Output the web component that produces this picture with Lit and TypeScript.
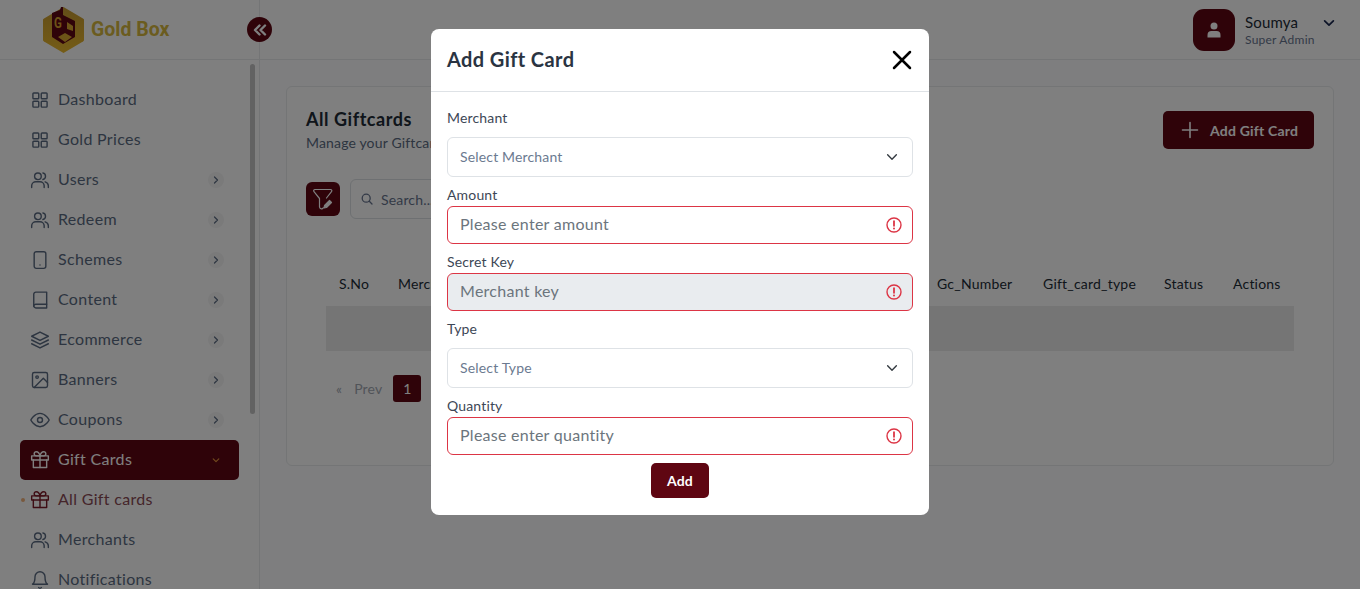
import { LitElement, html, css, svg } from 'lit'
import { customElement } from 'lit/decorators.js'

const icons: Record<string, unknown> = {
	grid: svg`<rect x="3.5" y="3.5" width="7" height="7" rx="1"/><rect x="13.5" y="3.5" width="7" height="7" rx="1"/><rect x="3.5" y="13.5" width="7" height="7" rx="1"/><rect x="13.5" y="13.5" width="7" height="7" rx="1"/>`,
	users: svg`<circle cx="9.5" cy="7.5" r="4"/><path d="M2 21v-2a5 5 0 0 1 5-5h5a5 5 0 0 1 5 5v2"/><path d="M15.500 3.600a4 4 0 0 1 0 7.800"/><path d="M22 21v-2a5 5 0 0 0-3.800-4.800"/>`,
	phone: svg`<rect x="5" y="2" width="14" height="20" rx="2.500"/><path d="M12 18h.01"/>`,
	book: svg`<path d="M4.500 19.500A2.500 2.500 0 0 1 7 17h13"/><path d="M7 2.500h13v19H7a2.500 2.500 0 0 1-2.500-2.500V5A2.500 2.500 0 0 1 7 2.500z"/>`,
	layers: svg`<path d="M12 2.500 2 7.500l10 5 10-5-10-5z"/><path d="m2 16.500 10 5 10-5"/><path d="m2 12 10 5 10-5"/>`,
	image: svg`<rect x="3" y="3" width="18" height="18" rx="2"/><circle cx="8.500" cy="8.500" r="1.500"/><path d="m21 15-5-5L5 21"/>`,
	eye: svg`<path d="M1 12s4-8 11-8 11 8 11 8-4 8-11 8-11-8-11-8z"/><circle cx="12" cy="12" r="3"/>`,
	gift: svg`<path d="M20 12v9H4v-9"/><rect x="2" y="7" width="20" height="5"/><path d="M12 21V7"/><path d="M12 7H7.500a2.500 2.500 0 0 1 0-5C11 2 12 7 12 7z"/><path d="M12 7h4.500a2.500 2.500 0 0 0 0-5C13 2 12 7 12 7z"/>`,
	bell: svg`<path d="M18 8A6 6 0 0 0 6 8c0 7-3 9-3 9h18s-3-2-3-9"/><path d="M13.700 21a2 2 0 0 1-3.400 0"/>`,
}

const icon = (name: string) =>
	html`<svg class="ico" viewBox="0 0 24 24" fill="none" stroke="currentColor" stroke-width="1.700" stroke-linecap="round" stroke-linejoin="round">${icons[name]}</svg>`

const chevronDown = html`<svg class="chev-down" viewBox="0 0 16 16" fill="none" stroke="currentColor" stroke-width="1.600" stroke-linecap="round" stroke-linejoin="round"><path d="m3 5.500 5 5 5-5"/></svg>`

const alertIcon = html`<svg class="alert" viewBox="0 0 16 16" fill="none" stroke="#dc3545"><circle cx="8" cy="8" r="7" stroke-width="1.400"/><path d="M8 4.200v4.600" stroke-width="1.800" stroke-linecap="round"/><circle cx="8" cy="11.400" r="1" fill="#dc3545" stroke="none"/></svg>`

const navItems = [
	{ label: 'Dashboard', icon: 'grid' },
	{ label: 'Gold Prices', icon: 'grid' },
	{ label: 'Users', icon: 'users', more: true },
	{ label: 'Redeem', icon: 'users', more: true },
	{ label: 'Schemes', icon: 'phone', more: true },
	{ label: 'Content', icon: 'book', more: true },
	{ label: 'Ecommerce', icon: 'layers', more: true },
	{ label: 'Banners', icon: 'image', more: true },
	{ label: 'Coupons', icon: 'eye', more: true },
]

@customElement('app-root')
export class AppRoot extends LitElement {
	static styles = css`
		:host {
			display: block;
			position: relative;
			height: 589px;
			overflow: hidden;
			background: #fcfcfe;
			font-family: 'Lato', 'Liberation Sans', sans-serif;
			letter-spacing: 0.01em;
			color: #212b36;
		}
		* {
			box-sizing: border-box;
		}

		/* Header */
		.header {
			display: flex;
			align-items: center;
			height: 60px;
			background: #fff;
			border-bottom: 1px solid #e8ebed;
		}
		.brand {
			display: flex;
			align-items: center;
			gap: 7px;
			width: 260px;
			height: 100%;
			padding-left: 43px;
			border-right: 1px solid #e8ebed;
		}
		.brand svg {
			width: 41px;
			height: 46px;
		}
		.brand span {
			font-family: 'Roboto', sans-serif;
			font-size: 19.5px;
			font-weight: 700;
			letter-spacing: 0;
			color: #d6b83f;
		}
		.collapse {
			position: absolute;
			left: 247px;
			top: 17px;
			width: 25px;
			height: 25px;
			border-radius: 50%;
			background: #5f0612;
			display: flex;
			align-items: center;
			justify-content: center;
		}
		.collapse svg {
			width: 14px;
			height: 14px;
		}
		.user {
			margin-left: auto;
			display: flex;
			align-items: center;
			padding-right: 24px;
		}
		.avatar {
			width: 42px;
			height: 42px;
			border-radius: 11px;
			background: #5f0612;
			display: flex;
			align-items: center;
			justify-content: center;
		}
		.avatar svg {
			width: 16px;
			height: 16px;
		}
		.who {
			margin-left: 10px;
			width: 77px;
			display: flex;
			flex-direction: column;
		}
		.who b {
			font-size: 15px;
			font-weight: 400;
			line-height: 20px;
			color: #212b36;
		}
		.who small {
			font-size: 12px;
			line-height: 16px;
			letter-spacing: 0.02em;
			color: #67748e;
		}
		.user .chev-down {
			width: 14px;
			height: 14px;
			color: #1b2850;
			stroke-width: 2;
			margin-bottom: 14px;
		}

		/* Shell */
		.shell {
			display: flex;
			height: 529px;
		}
		.sidebar {
			position: relative;
			flex: 0 0 260px;
			padding: 20px 20px 0;
			background: #fff;
			border-right: 1px solid #e8ebed;
			overflow: hidden;
		}
		.scrollbar {
			position: absolute;
			left: 250px;
			top: 4px;
			width: 5px;
			height: 350px;
			border-radius: 3px;
			background: #c4c4c4;
		}
		.nav-item {
			display: flex;
			align-items: center;
			height: 40px;
			width: 219px;
			padding: 0 0 4px 10px;
			font-size: 16px;
			letter-spacing: 0.02em;
			color: #5b6b82;
			border-radius: 5px;
		}
		.nav-item.active {
			background: #5f0612;
			color: #fff;
		}
		.nav-item.sub {
			position: relative;
			color: #8a4a55;
		}
		.nav-item.sub .ico {
			color: #7d1a28;
		}
		.nav-item.sub::before {
			content: '';
			position: absolute;
			left: 1px;
			top: 18px;
			width: 4px;
			height: 4px;
			border-radius: 50%;
			background: #f0b27a;
		}
		.ico {
			flex: none;
			width: 20px;
			height: 20px;
			margin: 3px 8px 0 0;
		}
		.arrow {
			margin: 4px 15px 0 auto;
			width: 16px;
			height: 16px;
			border-radius: 50%;
			background: #f4f4f5;
			display: flex;
			align-items: center;
			justify-content: center;
			color: #5b6b82;
		}
		.arrow svg {
			width: 8px;
			height: 8px;
		}
		.active .arrow {
			background: none;
			color: #e6953c;
		}

		/* Content */
		.main {
			flex: 1;
			padding: 26px 26px 0;
		}
		.card {
			height: 380px;
			padding: 20px 19px;
			background: #fff;
			border: 1px solid #e8ebed;
			border-radius: 6px;
		}
		.card-head {
			display: flex;
			justify-content: space-between;
			align-items: flex-start;
			height: 72px;
		}
		.card-head h4 {
			margin: 0;
			font-size: 18px;
			line-height: 25px;
			font-weight: 700;
			letter-spacing: 0.03em;
			color: #212b36;
		}
		.card-head p {
			margin: 0;
			font-size: 14px;
			line-height: 21px;
			color: #5b6b82;
		}
		.add-btn {
			display: flex;
			align-items: center;
			gap: 11px;
			width: 151px;
			height: 38px;
			margin: 4px 0 0;
			padding-left: 18px;
			border-radius: 5px;
			background: #5f0612;
			color: #fff;
			font-size: 14px;
			font-weight: 700;
			letter-spacing: 0.015em;
		}
		.add-btn svg {
			width: 18px;
			height: 18px;
		}
		.tools {
			display: flex;
			align-items: center;
			gap: 10px;
			height: 40px;
		}
		.filter {
			width: 34px;
			height: 34px;
			border-radius: 6px;
			background: #5f0612;
			display: flex;
			align-items: center;
			justify-content: center;
		}
		.filter svg {
			width: 24px;
			height: 24px;
		}
		.search {
			display: flex;
			align-items: center;
			gap: 8px;
			width: 200px;
			height: 40px;
			padding-left: 10px;
			border: 1px solid #dce0e4;
			border-radius: 6px;
			font-size: 14px;
			color: #67748e;
		}
		.search svg {
			width: 12px;
			height: 12px;
		}
		.table {
			width: 968px;
			margin: 42px 0 0 20px;
		}
		.thead {
			display: grid;
			grid-template-columns: 59px 539px 106px 121px 69px 74px;
			height: 45px;
			align-items: center;
			padding-bottom: 1px;
			font-size: 14px;
			font-weight: 400;
			letter-spacing: 0.015em;
			color: #212b36;
		}
		.thead span {
			padding-left: 13px;
		}
		.empty-row {
			height: 45px;
			background: #eaeaea;
		}
		.pager {
			display: flex;
			align-items: center;
			height: 27px;
			margin: 24px 0 0 10px;
			font-size: 14px;
			color: #a3a9b3;
		}
		.pager .prev {
			margin-left: 12px;
			margin-right: 11px;
		}
		.pager .page {
			width: 28px;
			height: 27px;
			border-radius: 3px;
			background: #5f0612;
			color: #fff;
			display: flex;
			align-items: center;
			justify-content: center;
		}

		/* Modal */
		.backdrop {
			position: absolute;
			inset: 0;
			background: rgba(0, 0, 0, 0.5);
			display: flex;
			justify-content: center;
			padding-top: 29px;
		}
		.modal {
			width: 498px;
			height: 486px;
			background: #fff;
			border-radius: 8px;
			display: flex;
			flex-direction: column;
		}
		.modal-head {
			display: flex;
			align-items: center;
			justify-content: space-between;
			height: 63px;
			padding: 0 16px;
			border-bottom: 1px solid #dee2e6;
		}
		.modal-head h5 {
			margin: 0 0 2px;
			font-size: 20px;
			font-weight: 700;
			letter-spacing: 0.02em;
			color: #2a3442;
		}
		.close {
			width: 24px;
			height: 24px;
			margin-right: -1px;
		}
		.modal-body {
			display: flex;
			flex-direction: column;
			gap: 8px;
			padding: 16px 16px 17px;
		}
		label {
			display: block;
			font-size: 14px;
			line-height: 19px;
			padding-bottom: 2px;
			color: #3d4756;
		}
		.select {
			display: flex;
			align-items: center;
			justify-content: space-between;
			height: 40px;
			margin-top: 8px;
			padding: 0 13px 2px 12px;
			border: 1px solid #dee2e6;
			border-radius: 6px;
			font-size: 14px;
			color: #6b7a90;
		}
		.select .chev-down {
			width: 14px;
			height: 14px;
			margin-top: 1px;
			color: #343a40;
		}
		.input {
			display: flex;
			align-items: center;
			justify-content: space-between;
			height: 38px;
			padding: 0 10px 3px 12px;
			border: 1px solid #dc3545;
			border-radius: 6px;
			font-size: 16px;
			letter-spacing: 0.017em;
			color: #6c757d;
		}
		.input.disabled {
			background: #e9ecef;
		}
		.alert {
			width: 16px;
			height: 16px;
			margin-top: 3px;
		}
		.submit {
			align-self: center;
			width: 58px;
			height: 35px;
			border-radius: 5px;
			background: #5f0612;
			color: #fff;
			font-size: 14px;
			font-weight: 700;
			display: flex;
			align-items: center;
			justify-content: center;
		}
	`

	renderLogo() {
		return html`<svg viewBox="0 0 41 46">
			<defs>
				<linearGradient id="gold" x1="0" y1="0" x2="0" y2="1">
					<stop offset="0" stop-color="#c69a32"/>
					<stop offset="1" stop-color="#eab92e"/>
				</linearGradient>
			</defs>
			<path d="M20.500 0 40 11.500c1 .6 1 1 1 2v19c0 1-.2 1.500-1 2L20.500 46 1 34.500c-.8-.5-1-1-1-2v-19c0-1 0-1.400 1-2z" fill="url(#gold)"/>
			<path d="M9 6l8-3 1-3h2v8l12 6v16l-12 7-11-7z" fill="#5f0612"/>
			<path d="M24 15l6 4v5l-6-2zM15 30l7-4 7 4-7 5z" fill="#d8a72f"/>
			<text x="11" y="21" font-family="Roboto, sans-serif" font-size="15" font-weight="700" textLength="8" lengthAdjust="spacingAndGlyphs" fill="#d8a72f">G</text>
		</svg>`
	}

	render() {
		return html`
			<div class="header">
				<div class="brand">${this.renderLogo()}<span>Gold Box</span></div>
				<div class="user">
					<div class="avatar">
						<svg viewBox="0 0 16 16" fill="#fff"><circle cx="8" cy="4" r="3.500"/><path d="M1.500 15.500v-2.500a4 4 0 0 1 4-4h5a4 4 0 0 1 4 4v2.500z"/></svg>
					</div>
					<div class="who"><b>Soumya</b><small>Super Admin</small></div>
					${chevronDown}
				</div>
			</div>
			<div class="collapse">
				<svg viewBox="0 0 14 14" fill="none" stroke="#fff" stroke-width="2.400" stroke-linecap="round" stroke-linejoin="round"><path d="M6.500 2.500 2 7l4.500 4.500M12 2.500 7.500 7l4.500 4.500"/></svg>
			</div>
			<div class="shell">
				<aside class="sidebar">
					<div class="scrollbar"></div>
					${navItems.map(
						(item) => html`<div class="nav-item">
							${icon(item.icon)}${item.label}
							${item.more
								? html`<span class="arrow"><svg viewBox="0 0 8 8" fill="none" stroke="currentColor" stroke-width="1.200" stroke-linecap="round" stroke-linejoin="round"><path d="m2.500 1 3 3-3 3"/></svg></span>`
								: ''}
						</div>`,
					)}
					<div class="nav-item active">
						${icon('gift')}Gift Cards
						<span class="arrow"><svg viewBox="0 0 10 10" fill="none" stroke="currentColor" stroke-width="1.400" stroke-linecap="round" stroke-linejoin="round"><path d="m1.500 3.500 3.500 3.500 3.500-3.500"/></svg></span>
					</div>
					<div class="nav-item sub">${icon('gift')}All Gift cards</div>
					<div class="nav-item">${icon('users')}Merchants</div>
					<div class="nav-item">${icon('bell')}Notifications</div>
				</aside>
				<main class="main">
					<section class="card">
						<div class="card-head">
							<div>
								<h4>All Giftcards</h4>
								<p>Manage your Giftcards</p>
							</div>
							<div class="add-btn">
								<svg viewBox="0 0 18 18" fill="none" stroke="#fff" stroke-width="1.600" stroke-linecap="round"><path d="M9 1.500v15M1.500 9h15"/></svg>
								Add Gift Card
							</div>
						</div>
						<div class="tools">
							<div class="filter">
								<svg viewBox="0 0 24 24" fill="none" stroke="#fff" stroke-width="1.200" stroke-linecap="round" stroke-linejoin="round">
									<path d="M4 2.500h15.500c1.200 0 1.800 1.200 1 2.200L15.500 11M4 2.500c-1.200 0-1.800 1.200-1 2.200L8.500 11.500v8.500a2 2 0 0 0 3.800.7"/>
									<path d="m13.500 18.500 5-5 2 2-5 5-2.500.5z" fill="#fff"/>
								</svg>
							</div>
							<div class="search">
								<svg viewBox="0 0 12 12" fill="none" stroke="#67748e" stroke-width="1.300" stroke-linecap="round"><circle cx="5.200" cy="5.200" r="4"/><path d="m8.300 8.300 2.700 2.700"/></svg>
								Search...
							</div>
						</div>
						<div class="table">
							<div class="thead">
								<span>S.No</span><span>Merchant</span><span>Gc_Number</span><span>Gift_card_type</span><span>Status</span><span>Actions</span>
							</div>
							<div class="empty-row"></div>
							<div class="pager"><span>«</span><span class="prev">Prev</span><span class="page">1</span></div>
						</div>
					</section>
				</main>
			</div>
			<div class="backdrop">
				<div class="modal">
					<div class="modal-head">
						<h5>Add Gift Card</h5>
						<svg class="close" viewBox="0 0 24 24" fill="none" stroke="#000" stroke-width="2.500" stroke-linecap="round"><path d="M4 4l16 16M20 4 4 20"/></svg>
					</div>
					<div class="modal-body">
						<div>
							<label>Merchant</label>
							<div class="select">Select Merchant ${chevronDown}</div>
						</div>
						<div>
							<label>Amount</label>
							<div class="input">Please enter amount ${alertIcon}</div>
						</div>
						<div>
							<label>Secret Key</label>
							<div class="input disabled">Merchant key ${alertIcon}</div>
						</div>
						<div>
							<label>Type</label>
							<div class="select">Select Type ${chevronDown}</div>
						</div>
						<div>
							<label>Quantity</label>
							<div class="input">Please enter quantity ${alertIcon}</div>
						</div>
						<div class="submit">Add</div>
					</div>
				</div>
			</div>
		`
	}
}
